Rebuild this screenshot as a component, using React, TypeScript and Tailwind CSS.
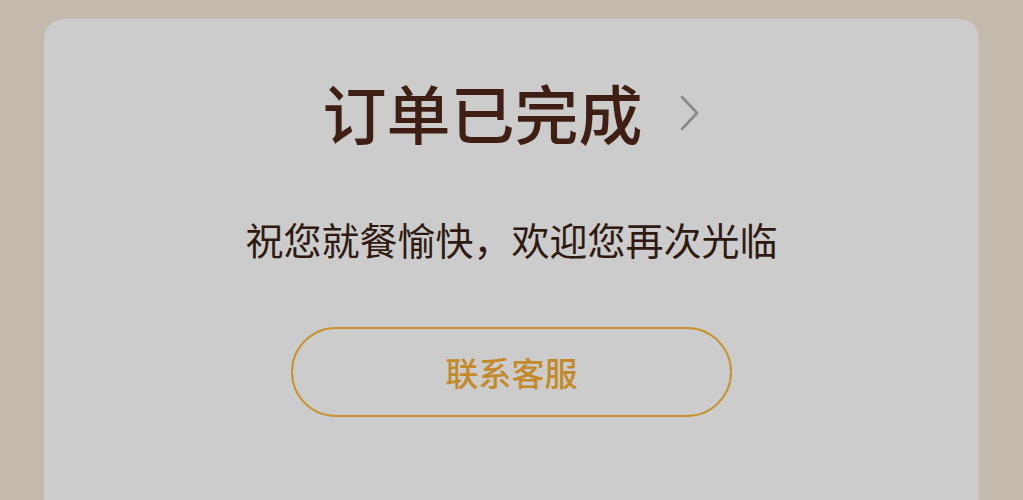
export default function App() {
  return (
    <div
      className="w-[1023px] h-[500px] overflow-hidden bg-[#c3b9ad] px-[44px] pt-[19px]"
      style={{ fontFamily: '"Noto Sans CJK SC", "Noto Sans", sans-serif' }}
    >
      <div className="h-[600px] rounded-t-[20px] bg-[#cbcccb] flex flex-col items-center">
        <div className="mt-[60px] flex items-center h-[64px]">
          <span className="text-[64px] leading-[64px] font-medium text-[#3f1f13]">
            订单已完成
          </span>
          <svg
            className="ml-[36px] mt-[4px]"
            width="22"
            height="38"
            viewBox="0 0 22 38"
            fill="none"
          >
            <path
              d="M3 3 L18 19 L3 35"
              stroke="#8b8886"
              strokeWidth="2.6"
              strokeLinecap="round"
              strokeLinejoin="round"
            />
          </svg>
        </div>
        <div className="mt-[77px] text-[38px] leading-[38px] text-[#2f1a12]">
          祝您就餐愉快，欢迎您再次光临
        </div>
        <button className="mt-[69px] w-[441px] h-[90px] rounded-full border-2 border-[#c8922f] flex items-center justify-center">
          <span className="text-[33px] leading-[33px] font-medium text-[#c48a2a]">
            联系客服
          </span>
        </button>
      </div>
    </div>
  );
}
